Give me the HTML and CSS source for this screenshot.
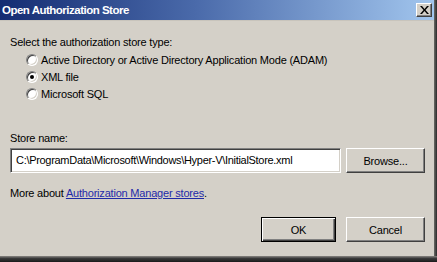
FILE: index.html
```html
<!DOCTYPE html>
<html>
<head>
<meta charset="utf-8">
<link rel="stylesheet" href="styles.css">
</head>
<body>
<div class="window">
  <div class="main">
    <div class="titlebar">
      <span class="title">Open Authorization Store</span>
      <span class="close">
        <svg width="9" height="8" viewBox="0 0 9 8"><path d="M0 0h2l2.5 3 2.5-3h2L5.5 4 9 8H7L4.5 5 2 8H0l3.5-4z" fill="#000"/></svg>
      </span>
    </div>
    <div class="content">
      <div class="label">Select the authorization store type:</div>
      <div class="radios">
        <div class="radio-row"><span class="radio"></span><span>Active Directory or Active Directory Application Mode (ADAM)</span></div>
        <div class="radio-row"><span class="radio checked"></span><span>XML file</span></div>
        <div class="radio-row"><span class="radio"></span><span>Microsoft SQL</span></div>
      </div>
      <div class="label store-label">Store name:</div>
      <div class="store-row">
        <div class="input">C:\ProgramData\Microsoft\Windows\Hyper-V\InitialStore.xml</div>
        <div class="btn">Browse...</div>
      </div>
      <div class="more">More about <a class="link">Authorization Manager stores</a>.</div>
      <div class="actions">
        <div class="btn default">OK</div>
        <div class="btn">Cancel</div>
      </div>
    </div>
  </div>
  <div class="shadow-right"></div>
</div>
<div class="shadow-bottom"></div>
</body>
</html>
```
FILE: styles.css
```css
html, body {
  margin: 0;
  padding: 0;
  width: 437px;
  height: 262px;
  overflow: hidden;
  background: #d4d0c8;
  font-family: "Liberation Sans", Arial, sans-serif;
  font-size: 11px;
  color: #000;
}
.window {
  display: flex;
  height: 256px;
}
.main {
  flex: 1;
  display: flex;
  flex-direction: column;
}
.shadow-right {
  width: 4px;
  background: linear-gradient(to right, #6a6a66, #2a2a2a);
}
.shadow-bottom {
  height: 6px;
  background: linear-gradient(to bottom, #8a8884, #3a3a3a 40%, #1a1a1a);
}
.titlebar {
  height: 21px;
  box-sizing: border-box;
  display: flex;
  align-items: center;
  justify-content: space-between;
  padding: 0 2px 0 2px;
  background: linear-gradient(to right, #142c72, #4a6aaa 45%, #a2c6ee);
  border-bottom: 1px solid #c8c4bc;
}
.title {
  color: #fff;
  font-weight: bold;
  font-size: 11.5px;
  letter-spacing: -0.5px;
}
.close {
  width: 16px;
  height: 14px;
  box-sizing: border-box;
  background: #d4d0c8;
  border: 1px solid;
  border-color: #fff #404040 #404040 #fff;
  box-shadow: inset -1px -1px #808080;
  display: flex;
  align-items: center;
  justify-content: center;
}
.content {
  display: flex;
  flex-direction: column;
  padding: 14px 9px 0 10px;
  letter-spacing: -0.2px;
}
.label {
  height: 14px;
  line-height: 14px;
}
.radios {
  display: flex;
  flex-direction: column;
  gap: 3px;
  padding: 4px 0 0 16px;
}
.radio-row {
  display: flex;
  align-items: center;
  gap: 3px;
  height: 14px;
}
.radio {
  width: 12px;
  height: 12px;
  box-sizing: border-box;
  border-radius: 50%;
  background: #fff;
  border: 1px solid;
  border-color: #808080 #fff #fff #808080;
  box-shadow: inset 1px 1px #404040, inset -1px -1px #d4d0c8;
  display: flex;
  align-items: center;
  justify-content: center;
}
.radio.checked::after {
  content: "";
  width: 4px;
  height: 4px;
  border-radius: 50%;
  background: #000;
}
.store-label {
  margin-top: 30px;
}
.store-row {
  display: flex;
  gap: 5px;
  margin-top: 3px;
}
.input {
  width: 331px;
  height: 25px;
  box-sizing: border-box;
  background: #fff;
  border: 1px solid;
  border-color: #808080 #fff #fff #808080;
  box-shadow: inset 1px 1px #404040, inset -1px -1px #d4d0c8;
  padding: 0 5px;
  line-height: 23px;
  white-space: nowrap;
  overflow: hidden;
  letter-spacing: -0.3px;
}
.btn {
  width: 79px;
  height: 25px;
  box-sizing: border-box;
  background: #d4d0c8;
  border: 1px solid;
  border-color: #fff #404040 #404040 #fff;
  box-shadow: inset -1px -1px #808080;
  display: flex;
  align-items: center;
  justify-content: center;
}
.btn.default {
  width: 75px;
  border: 1px solid #000;
  box-shadow: inset 1px 1px #fff, inset -1px -1px #404040, inset -2px -2px #808080;
}
.more {
  margin-top: 13px;
  height: 14px;
  line-height: 14px;
}
.link {
  color: #1f2aa8;
  text-decoration: underline;
}
.actions {
  display: flex;
  justify-content: flex-end;
  gap: 10px;
  margin-top: 17px;
}
```
